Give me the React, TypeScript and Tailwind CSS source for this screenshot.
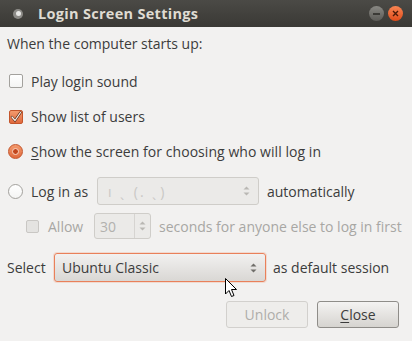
import React from 'react'

const FONT = { fontFamily: '"Open Sans", "DejaVu Sans", sans-serif' }

function Arrows({ color = '#6f6d69' }: { color?: string }) {
  return (
    <svg width="7" height="12" viewBox="0 0 7 12">
      <path d="M0.5 4.5 L3.5 1.5 L6.5 4.5 Z" fill={color} />
      <path d="M0.5 7.5 L3.5 10.5 L6.5 7.5 Z" fill={color} />
    </svg>
  )
}

function CheckBox({ checked, disabled }: { checked?: boolean; disabled?: boolean }) {
  if (checked) {
    return (
      <div className="w-[14px] h-[14px] rounded-[2px] border border-[#c4552b] bg-gradient-to-b from-[#f39a6d] to-[#e0693c] flex items-center justify-center">
        <svg width="12" height="12" viewBox="0 0 12 12">
          <path d="M2 6 L5 9.5 L10.5 1.5" fill="none" stroke="#5a2a16" strokeWidth="2.4" strokeLinecap="round" />
          <path d="M2 6 L5 9.5 L10.5 1.5" fill="none" stroke="#fdf1ea" strokeWidth="1.2" strokeLinecap="round" />
        </svg>
      </div>
    )
  }
  return (
    <div
      className={
        disabled
          ? 'w-[13px] h-[13px] rounded-[2px] border border-[#c9c7c4] bg-[#e4e3e1]'
          : 'w-[14px] h-[14px] rounded-[2px] border border-[#a3a19d] bg-gradient-to-b from-[#ffffff] to-[#f4f4f3]'
      }
    />
  )
}

function Radio({ checked }: { checked?: boolean }) {
  if (checked) {
    return (
      <div className="w-[15px] h-[15px] rounded-full border border-[#c4552b] bg-gradient-to-b from-[#f39a6d] to-[#e0693c] flex items-center justify-center">
        <div className="w-[7px] h-[7px] rounded-full bg-[#c2461c] border border-[#fbd7c4]" />
      </div>
    )
  }
  return <div className="w-[15px] h-[15px] rounded-full border border-[#a3a19d] bg-gradient-to-b from-[#ffffff] to-[#f4f4f3]" />
}

export default function App() {
  return (
    <div className="relative w-[412px] h-[341px] bg-[#f2f1f0] text-[#3c3c3c] text-[14px] overflow-hidden" style={FONT}>
      {/* Title bar */}
      <div className="h-[27px] bg-gradient-to-b from-[#4b4a46] to-[#3a3935] flex items-center">
        <div className="ml-[13px] w-[10px] h-[10px] rounded-full bg-[#8c8b87] flex items-center justify-center">
          <div className="w-[5px] h-[5px] rounded-full bg-[#e8e8e6]" />
        </div>
        <div className="ml-[15px] text-[14.5px] font-bold text-[#dfdbd2] tracking-[0.3px]">Login Screen Settings</div>
        <div className="ml-auto mr-[9px] flex items-center gap-[4px]">
          <div className="w-[15px] h-[15px] rounded-full bg-gradient-to-b from-[#8a8984] to-[#5c5b57] flex items-center justify-center">
            <div className="w-[7px] h-[2px] bg-[#3b3a36]" />
          </div>
          <div className="w-[15px] h-[15px] rounded-full bg-gradient-to-b from-[#f88552] to-[#df4a16] flex items-center justify-center">
            <svg width="7" height="7" viewBox="0 0 7 7">
              <path d="M1 1 L6 6 M6 1 L1 6" stroke="#4a1a08" strokeWidth="1.4" />
            </svg>
          </div>
        </div>
      </div>

      <div className="px-[7px]">
        <div className="h-[32px] flex items-center">When the computer starts up:</div>
        <div className="h-[4px]" />

        <div className="h-[36px] flex items-center pl-[2px]">
          <CheckBox />
          <span className="ml-[8px]">Play login sound</span>
        </div>
        <div className="h-[35px] flex items-center pl-[2px]">
          <CheckBox checked />
          <span className="ml-[8px]">Show list of users</span>
        </div>
        <div className="h-[35px] flex items-center pl-[1px]">
          <Radio checked />
          <span className="ml-[8px] tracking-[0.05px]">
            <span className="underline underline-offset-2">S</span>how the screen for choosing who will log in
          </span>
        </div>

        <div className="h-[44px] flex items-center pl-[1px]">
          <Radio />
          <span className="ml-[8px] w-[66px]">Log in as</span>
          <div className="w-[162px] h-[28px] rounded-[3px] border border-[#cfcdc9] bg-[#ebeae8] flex items-center pl-[10px] pr-[8px]">
            <span className="text-[#c9c8c5] tracking-[2px]">ı ˎ (. ˎ)</span>
            <span className="ml-auto">
              <Arrows color="#b9b7b3" />
            </span>
          </div>
          <span className="ml-[8px]">automatically</span>
        </div>

        <div className="h-[26px] flex items-center pl-[19px] text-[#a8a7a4]">
          <CheckBox disabled />
          <span className="ml-[9px] w-[46px]">Allow</span>
          <div className="w-[57px] h-[26px] rounded-[3px] border border-[#cfcdc9] bg-[#ebeae8] flex items-stretch">
            <span className="flex-1 flex items-center pl-[5px] text-[#b2b1ae]">30</span>
            <div className="w-[16px] border-l border-[#d6d4d1] flex items-center justify-center">
              <Arrows color="#b9b7b3" />
            </div>
          </div>
          <span className="ml-[8px]">seconds for anyone else to log in first</span>
        </div>

        <div className="mt-[14px] h-[29px] flex items-center">
          <span className="w-[47px]">Select</span>
          <div className="w-[212px] h-[29px] rounded-[3px] border border-[#e9805a] shadow-[0_0_0_1px_rgba(240,150,110,0.25)] bg-gradient-to-b from-[#f2f1f0] to-[#d9d7d4] flex items-center pl-[7px] pr-[8px]">
            <span>Ubuntu Classic</span>
            <span className="ml-auto">
              <Arrows />
            </span>
          </div>
          <span className="ml-[7px]">as default session</span>
        </div>

        <div className="mt-[19px] h-[27px] flex justify-end gap-[9px] pr-[6px]">
          <div className="w-[82px] h-[27px] rounded-[3px] border border-[#d2d0cd] bg-[#eeedeb] flex items-center justify-center text-[#aeadaa]">
            Unlock
          </div>
          <div className="w-[82px] h-[27px] rounded-[3px] border border-[#8f8d89] bg-gradient-to-b from-[#f4f3f2] to-[#d6d4d0] flex items-center justify-center">
            <span>
              <span className="underline underline-offset-2">C</span>lose
            </span>
          </div>
        </div>
      </div>

      {/* mouse cursor */}
      <svg className="absolute left-[225px] top-[278px]" width="13" height="20" viewBox="0 0 13 20">
        <path d="M0.5 0.5 L0.5 16 L4 12.5 L6.5 18.5 L9 17.5 L6.5 11.5 L11.5 11.5 Z" fill="#fff" stroke="#000" strokeWidth="1" strokeLinejoin="round" />
      </svg>
    </div>
  )
}
